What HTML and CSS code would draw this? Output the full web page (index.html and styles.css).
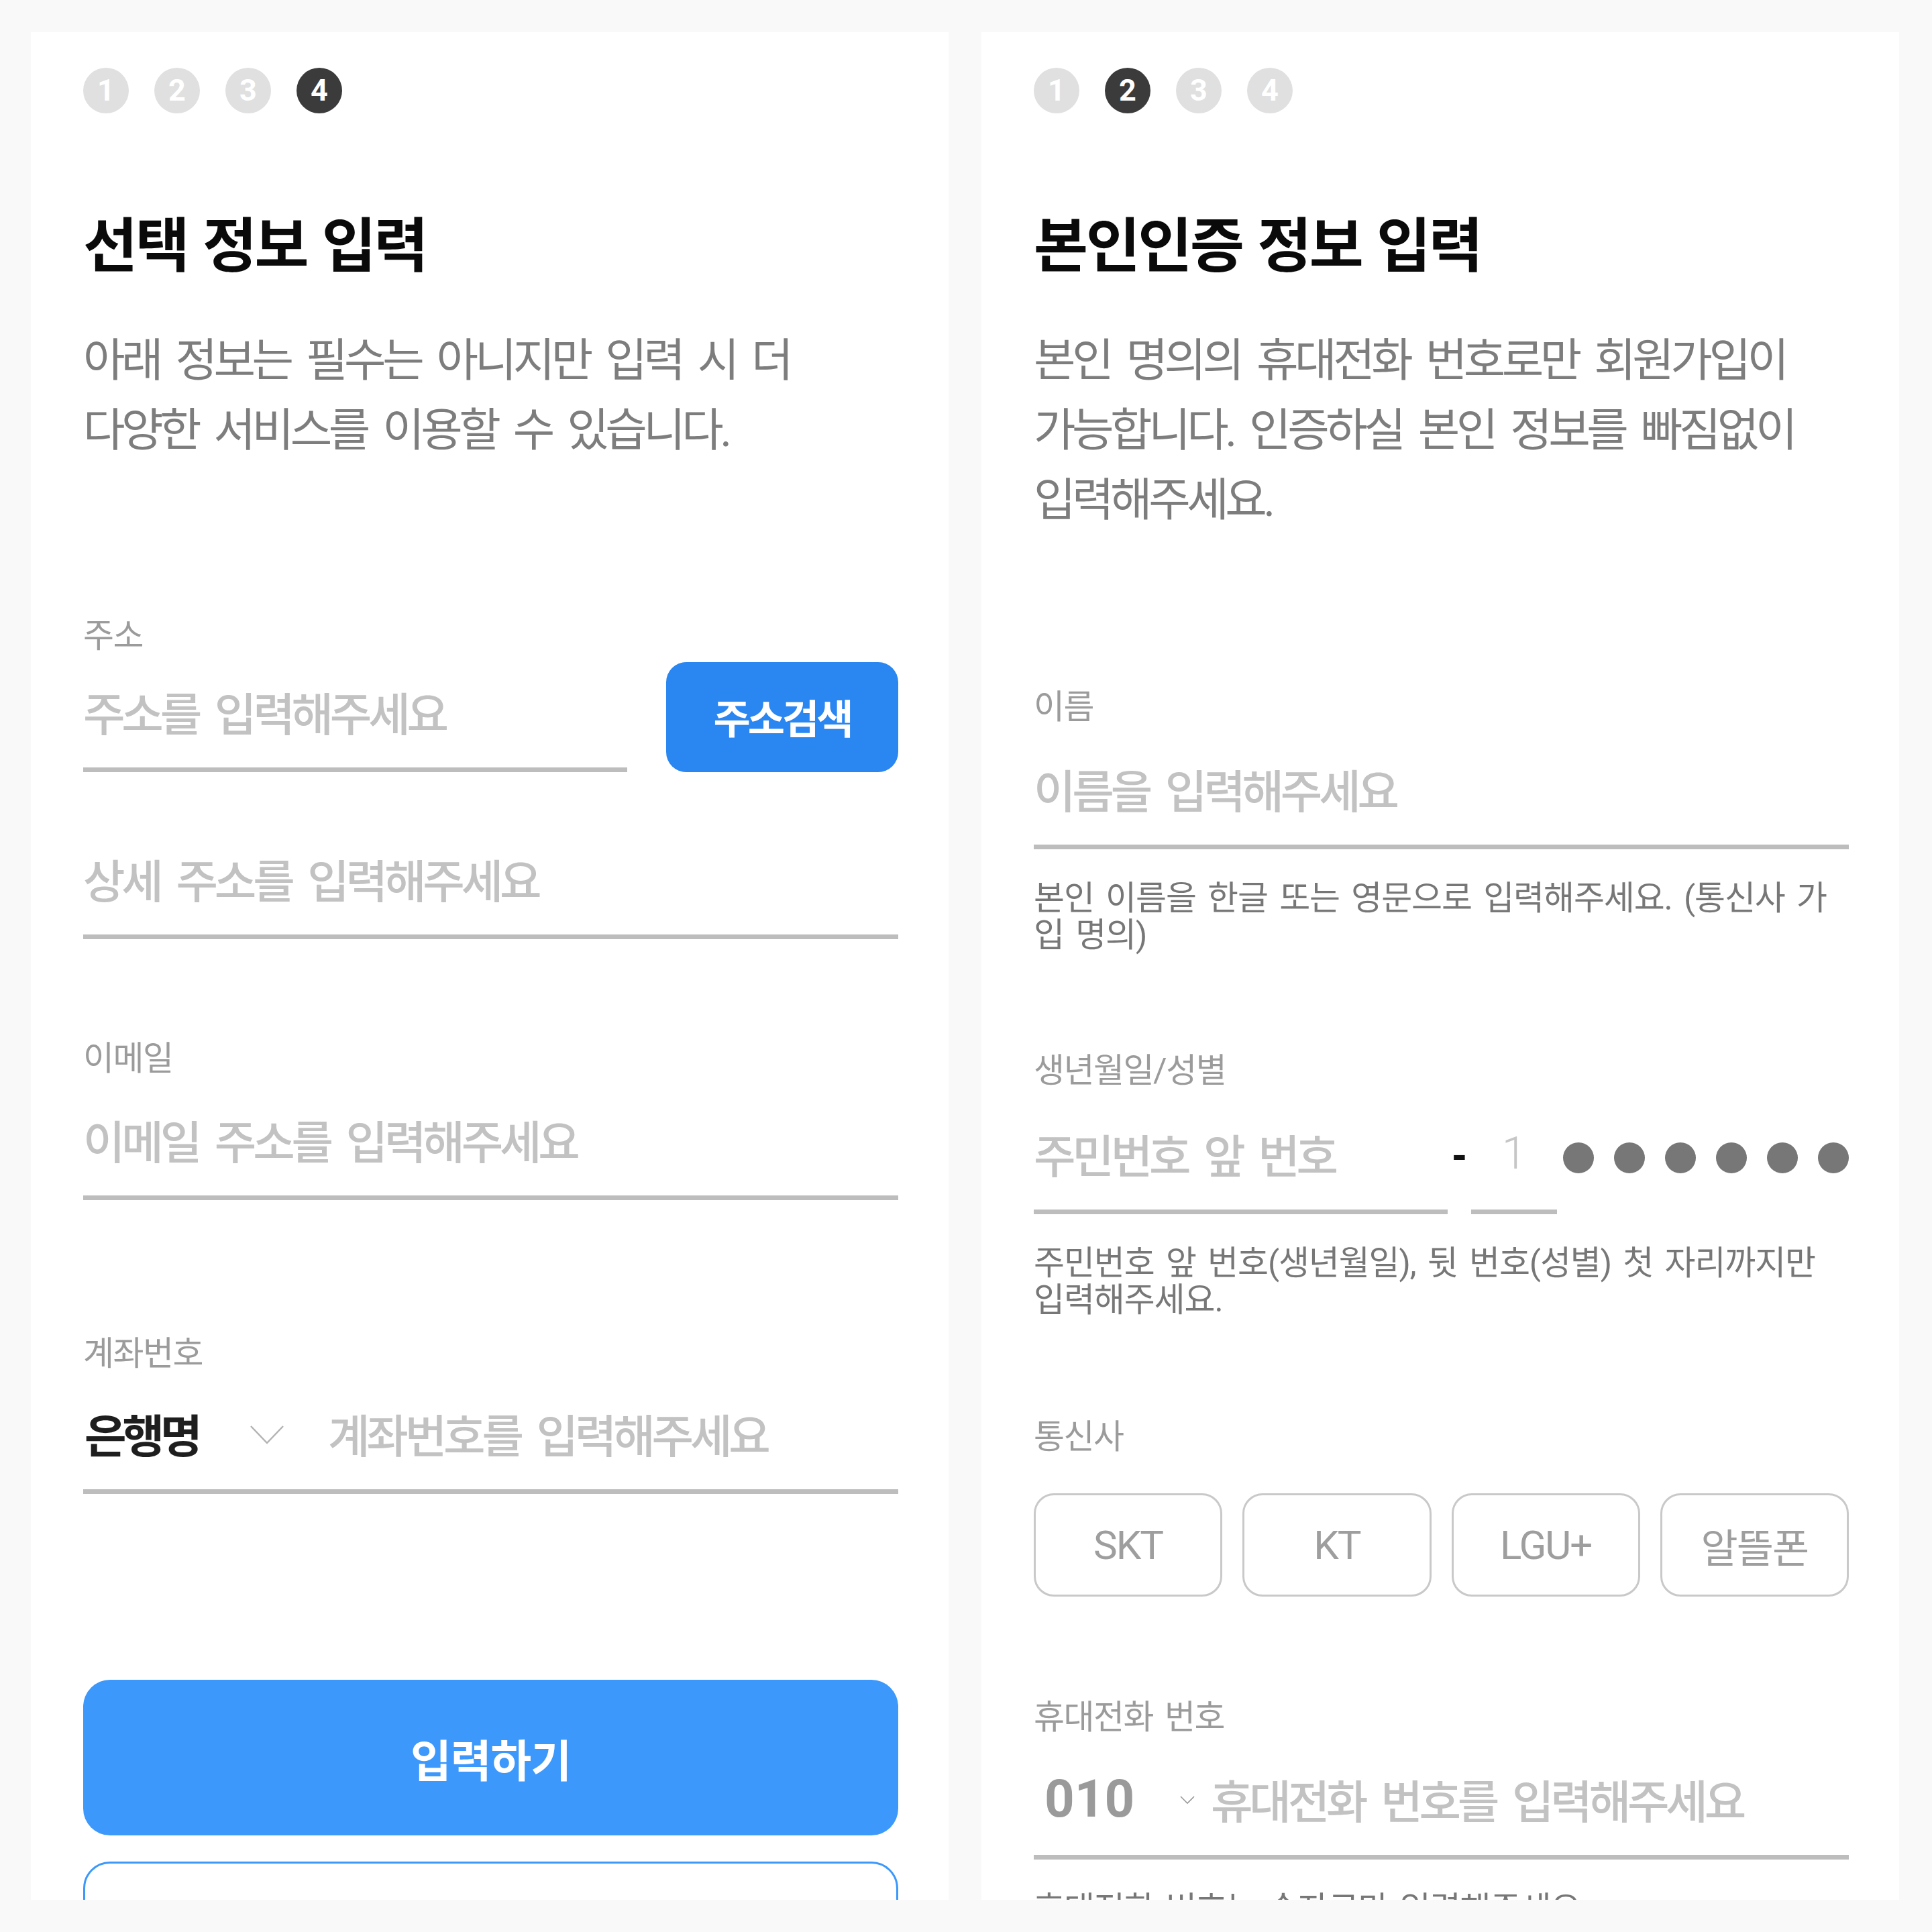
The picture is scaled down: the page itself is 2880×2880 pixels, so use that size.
FILE: index.html
```html
<!DOCTYPE html>
<html lang="ko">
<head>
<meta charset="utf-8">
<title>회원가입</title>
<link rel="stylesheet" href="styles.css">
</head>
<body>
<div class="page">
  <section class="card">
    <div class="steps">
      <span class="step">1</span>
      <span class="step">2</span>
      <span class="step">3</span>
      <span class="step on">4</span>
    </div>
    <h1 class="title">선택 정보 입력</h1>
    <p class="desc">아래 정보는 필수는 아니지만 입력 시 더<br>다양한 서비스를 이용할 수 있습니다.</p>

    <div class="label first">주소</div>
    <div class="addr-row">
      <div class="input grow"><span class="ph">주소를 입력해주세요</span></div>
      <button class="btn-search">주소검색</button>
    </div>
    <div class="input detail"><span class="ph">상세 주소를 입력해주세요</span></div>

    <div class="label email-label">이메일</div>
    <div class="input email"><span class="ph">이메일 주소를 입력해주세요</span></div>

    <div class="label account-label">계좌번호</div>
    <div class="input account">
      <div class="bank">
        <span class="bank-name">은행명</span>
        <svg class="chev-lg" width="52" height="30" viewBox="0 0 52 30"><polyline points="2,2 26,27 50,2" fill="none" stroke="#b3b3b3" stroke-width="2.5"/></svg>
      </div>
      <span class="ph">계좌번호를 입력해주세요</span>
    </div>

    <button class="btn-primary">입력하기</button>
    <button class="btn-outline"></button>
  </section>

  <section class="card">
    <div class="steps">
      <span class="step">1</span>
      <span class="step on">2</span>
      <span class="step">3</span>
      <span class="step">4</span>
    </div>
    <h1 class="title">본인인증 정보 입력</h1>
    <p class="desc">본인 명의의 휴대전화 번호로만 회원가입이<br>가능합니다. 인증하실 본인 정보를 빠짐없이<br>입력해주세요.</p>

    <div class="label first-r">이름</div>
    <div class="input name"><span class="ph">이름을 입력해주세요</span></div>
    <p class="help">본인 이름을 한글 또는 영문으로 입력해주세요. (통신사 가<br>입 명의)</p>

    <div class="label birth-label">생년월일/성별</div>
    <div class="ssn-row">
      <div class="input ssn-front"><span class="ph">주민번호 앞 번호</span></div>
      <span class="dash">-</span>
      <div class="input ssn-back"><span class="digit">1</span></div>
      <div class="dots"><i></i><i></i><i></i><i></i><i></i><i></i></div>
    </div>
    <p class="help">주민번호 앞 번호(생년월일), 뒷 번호(성별) 첫 자리까지만<br>입력해주세요.</p>

    <div class="label carrier-label">통신사</div>
    <div class="carriers">
      <button class="carrier">SKT</button>
      <button class="carrier">KT</button>
      <button class="carrier">LGU+</button>
      <button class="carrier">알뜰폰</button>
    </div>

    <div class="label phone-label">휴대전화 번호</div>
    <div class="input phone">
      <div class="prefix">
        <span class="prefix-num">010</span>
        <svg class="chev-sm" width="22" height="14" viewBox="0 0 22 14"><polyline points="1,2 11,12 21,2" fill="none" stroke="#9a9a9a" stroke-width="1.6"/></svg>
      </div>
      <span class="ph">휴대전화 번호를 입력해주세요</span>
    </div>
    <p class="help phone-help">휴대전화 번호는 숫자로만 입력해주세요.</p>
  </section>
</div>
</body>
</html>
```

FILE: styles.css
```css
* { box-sizing: border-box; }

html, body {
  margin: 0;
  padding: 0;
}

body {
  background: #f9f9f9;
  font-family: Roboto, "Noto Sans CJK KR", sans-serif;
  color: #111;
}

.page {
  display: flex;
  gap: 49px;
  padding: 48px 49px 48px 46px;
  height: 2880px;
}

.card {
  flex: none;
  width: 1368px;
  height: 2784px;
  background: #fff;
  overflow: hidden;
  padding: 53px 75px 0 78px;
}

/* steps */
.steps {
  display: flex;
  gap: 38px;
  height: 68px;
}

.step {
  width: 68px;
  height: 68px;
  border-radius: 50%;
  background: #e0e0e0;
  color: #fff;
  font-family: Roboto, sans-serif;
  font-weight: 700;
  font-size: 45px;
  line-height: 68px;
  text-align: center;
}

.step.on {
  background: #3b3b3b;
}

/* headings */
.title {
  margin: 148px 0 0;
  font-size: 88px;
  font-weight: 700;
  line-height: 100px;
  letter-spacing: -3.3px;
  word-spacing: 4px;
  color: #0a0a0a;
}

.desc {
  margin: 69px 0 0;
  font-size: 68px;
  line-height: 104px;
  letter-spacing: -5.5px;
  word-spacing: 12px;
  color: #7d7d7d;
}

/* labels */
.label {
  font-size: 50px;
  line-height: 60px;
  letter-spacing: -1.5px;
  word-spacing: 6px;
  color: #9b9b9b;
}

.label.first { margin-top: 224px; }
.label.first-r { margin-top: 226px; }
.label.email-label { margin-top: 148px; }
.label.account-label { margin-top: 199px; }
.label.birth-label { margin-top: 144px; }
.label.carrier-label { margin-top: 146px; }
.label.phone-label { margin-top: 150px; }

/* inputs */
.input {
  display: flex;
  align-items: center;
  height: 163px;
  padding-bottom: 12px;
  border-bottom: 7px solid #bdbdbd;
}

.ph {
  font-size: 68px;
  font-weight: 500;
  letter-spacing: -5.2px;
  word-spacing: 12px;
  color: #c2c2c2;
  white-space: nowrap;
}

.addr-row {
  display: flex;
  align-items: flex-end;
  gap: 58px;
  margin-top: 9px;
}

.grow { flex: 1; }

.btn-search {
  flex: none;
  width: 346px;
  height: 164px;
  border: none;
  border-radius: 30px;
  background: #2a86f0;
  color: #fff;
  font-family: Roboto, "Noto Sans CJK KR", sans-serif;
  font-size: 60px;
  font-weight: 700;
  letter-spacing: -4px;
  padding: 0 0 4px;
}

.input.detail { margin-top: 86px; }
.input.email { margin-top: 18px; }
.input.account { margin-top: 16px; }
.input.name { margin-top: 19px; }
.input.phone { margin-top: 19px; }

.bank {
  display: flex;
  align-items: center;
  justify-content: space-between;
  width: 300px;
  margin-right: 65px;
  padding-left: 2px;
}

.bank-name {
  font-size: 68px;
  font-weight: 700;
  letter-spacing: -6px;
  color: #1e1e1e;
}

.chev-lg { margin-top: 6px; }

/* buttons */
.btn-primary {
  display: block;
  width: 100%;
  height: 232px;
  margin-top: 277px;
  border: none;
  border-radius: 40px;
  background: #3c98fb;
  color: #fff;
  font-family: Roboto, "Noto Sans CJK KR", sans-serif;
  font-size: 66px;
  font-weight: 700;
  letter-spacing: -1px;
}

.btn-outline {
  display: block;
  width: 100%;
  height: 232px;
  margin-top: 39px;
  border: 3px solid #3c98fb;
  border-radius: 40px;
  background: #fff;
}

/* help text */
.help {
  margin: 46px 0 0;
  font-size: 50px;
  line-height: 55px;
  letter-spacing: -1.1px;
  word-spacing: 6px;
  color: #777;
}

.help.phone-help { margin-top: 47px; }

/* ssn row */
.ssn-row {
  display: flex;
  align-items: flex-end;
  margin-top: 21px;
}

.ssn-front {
  width: 617px;
  flex: none;
}

.dash {
  flex: none;
  width: 35px;
  height: 163px;
  display: flex;
  align-items: center;
  justify-content: center;
  padding-bottom: 10px;
  font-size: 56px;
  font-weight: 900;
  color: #111;
}

.ssn-back {
  width: 128px;
  flex: none;
  justify-content: center;
}

.digit {
  font-family: Roboto, sans-serif;
  font-size: 66px;
  font-weight: 300;
  color: #c6c6c6;
}

.dots {
  flex: 1;
  height: 163px;
  display: flex;
  align-items: center;
  justify-content: flex-end;
  gap: 30px;
  padding-bottom: 12px;
}

.dots i {
  width: 46px;
  height: 46px;
  border-radius: 50%;
  background: #777;
  margin-top: 6px;
}

/* carriers */
.carriers {
  display: grid;
  grid-template-columns: repeat(4, 1fr);
  gap: 30px;
  margin-top: 54px;
}

.carrier {
  height: 154px;
  border: 3px solid #c9c9c9;
  border-radius: 30px;
  background: #fff;
  color: #9e9e9e;
  font-family: Roboto, "Noto Sans CJK KR", sans-serif;
  font-size: 60px;
  letter-spacing: -2px;
}

/* phone */
.prefix {
  display: flex;
  align-items: center;
  justify-content: space-between;
  width: 240px;
  padding-left: 16px;
  margin-right: 24px;
}

.prefix-num {
  font-family: Roboto, sans-serif;
  font-size: 78px;
  font-weight: 700;
  color: #9a9a9a;
}

.chev-sm { margin-top: 4px; }
```
